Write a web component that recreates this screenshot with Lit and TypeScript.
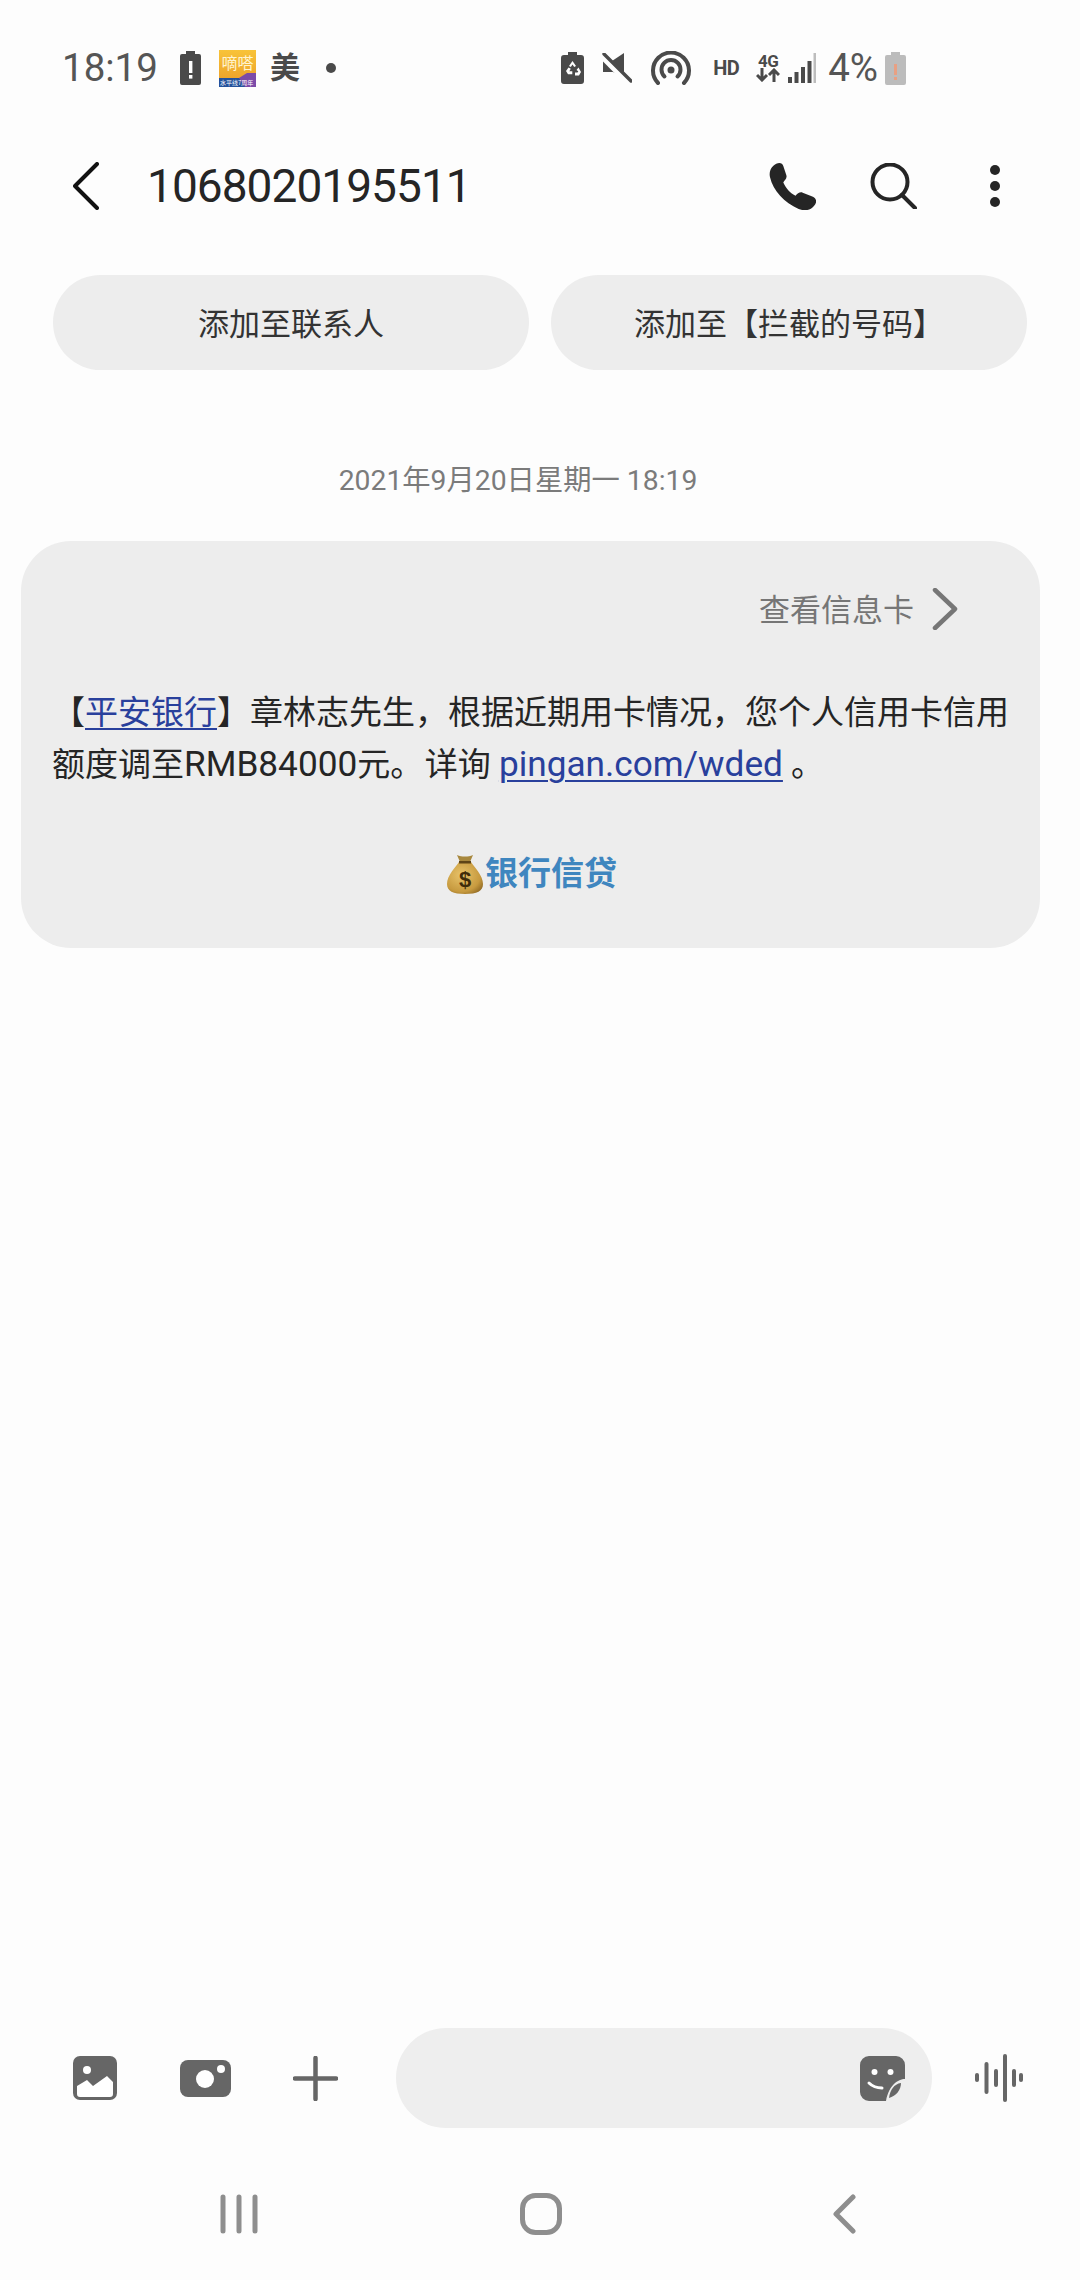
import { LitElement, html, css } from "lit";
import { customElement } from "lit/decorators.js";

@customElement("app-root")
export class AppRoot extends LitElement {
  static styles = css`
    :host { display: block; width: 1080px; height: 2280px; background: #fdfdfd; font-family: Roboto, "Noto Sans CJK SC", sans-serif; color: #252525; overflow: hidden; }
    svg { display: block; flex: none; }
    .page { display: flex; flex-direction: column; height: 2280px; }

    .status { height: 136px; flex: none; display: flex; align-items: center; padding-left: 62px; color: #555; }
    .time { font-size: 38.5px; line-height: 1; width: 118px; flex: none; }
    .mei { font-size: 30px; font-weight: 700; line-height: 1; margin-left: 14px; width: 56px; flex: none; color: #4a4a4a; }
    .app { margin-left: 18px; width: 37px; height: 37px; flex: none; }
    .dot { width: 10px; height: 10px; border-radius: 50%; background: #4a4a4a; flex: none; }
    .s-right { margin-left: auto; display: flex; align-items: center; padding-right: 174px; }
    .hd { font-size: 20px; font-weight: 700; line-height: 1; width: 28px; color: #4a4a4a; margin: 0 15px 0 22px; flex: none; letter-spacing: -0.5px; }
    .net { display: flex; flex-direction: column; align-items: center; width: 24px; flex: none; margin-right: 8px; }
    .net span { font-size: 17px; font-weight: 700; line-height: 14px; color: #4a4a4a; letter-spacing: -0.5px; }
    .pct { font-size: 38.5px; line-height: 1; margin: 0 7px 0 12px; flex: none; }

    .head { height: 100px; flex: none; display: flex; align-items: center; padding: 0 80px 0 73px; }
    .title { font-size: 46px; line-height: 1; margin-left: 48px; letter-spacing: -0.95px; color: #252525; }
    .head-icons { margin-left: auto; display: flex; align-items: center; }

    .actions { flex: none; margin-top: 39px; display: flex; gap: 22px; padding: 0 53px; }
    .btn { width: 476px; height: 95px; border-radius: 48px; background: #ededed; display: flex; align-items: center; justify-content: center; font-size: 31px; color: #333; padding-bottom: 2px; box-sizing: border-box; }

    .date { flex: none; height: 171px; display: flex; align-items: center; justify-content: center; font-size: 28.3px; color: #7b7b7b; padding-top: 43px; padding-right: 44px; box-sizing: border-box; }

    .bubble { flex: none; margin: 0 40px 0 21px; height: 407px; box-sizing: border-box; background: #ededed; border-radius: 50px; padding: 45px 32px 0 31px; }
    .card-link { display: flex; justify-content: flex-end; align-items: center; gap: 18px; height: 42px; padding-right: 50px; font-size: 31px; color: #767676; }
    .chev { margin-top: 3px; }
    .text { margin-top: 59px; font-size: 33px; line-height: 52px; white-space: nowrap; color: #252525; }
    .text a { color: #29409c; text-decoration: underline; text-underline-offset: 4px; text-decoration-thickness: 2px; }
    .text .latin { font-size: 35.2px; line-height: 0; }
    .sp { margin-right: 1.5px; }
    .promo { margin-top: 62px; display: flex; align-items: center; justify-content: center; gap: 2px; font-size: 33px; font-weight: 700; color: #3f86bf; line-height: 42px; padding-left: 4px; }

    .spacer { flex: 1; }

    .compose { flex: none; height: 100px; display: flex; align-items: center; padding-left: 73px; }
    .input { width: 536px; height: 100px; border-radius: 50px; background: #eeeeee; margin-left: 58px; display: flex; align-items: center; justify-content: flex-end; padding-right: 27px; box-sizing: border-box; flex: none; }

    .nav { flex: none; height: 152px; display: flex; align-items: center; padding: 20px 0 0 220px; box-sizing: border-box; }
  `;

  render() {
    return html`
      <div class="page">
        <div class="status">
          <span class="time">18:19</span>
          <svg width="21" height="34" viewBox="0 0 21 34"><path fill="#4a4a4a" d="M6 0h9v3h4a2 2 0 0 1 2 2v27a2 2 0 0 1-2 2H2a2 2 0 0 1-2-2V5a2 2 0 0 1 2-2h4z"/><rect x="9" y="10" width="3.4" height="12" fill="#fff"/><rect x="9" y="24" width="3.4" height="3.6" fill="#fff"/></svg>
          <svg class="app" viewBox="0 0 37 37">
            <defs><linearGradient id="ag" x1="0" y1="0" x2="0" y2="1"><stop offset="0" stop-color="#f8c338"/><stop offset="1" stop-color="#eea52c"/></linearGradient></defs>
            <rect width="37" height="28" fill="url(#ag)"/>
            <rect y="28" width="37" height="9" fill="#24519b"/>
            <path d="M20 28l8-5h9v14H26z" fill="#7c4ba8"/>
            <text x="18.5" y="19" text-anchor="middle" font-size="16" fill="#fff4d0" font-family="Noto Sans CJK SC">嘀嗒</text>
            <text x="1" y="35" font-size="6" fill="#fff" font-family="Noto Sans CJK SC">水平线7周年</text>
          </svg>
          <span class="mei">美</span>
          <span class="dot"></span>
          <div class="s-right">
            <svg width="23" height="32" viewBox="0 0 23 32"><path fill="#4a4a4a" d="M7 0h9v3h4a3 3 0 0 1 3 3v23a3 3 0 0 1-3 3H3a3 3 0 0 1-3-3V6a3 3 0 0 1 3-3h4z"/><path fill="#fff" d="M11.5 9l3.500 5-1.800 1-1.700-2.400-1.700 2.400-1.800-1zM5 19l2.500-3.500 2.300 1.300-1.500 2.400h3v3H7zM17.500 15.500l2.500 4.500-2 3.500h-4v-3h2.500l.8-1.300-1.800-1.200z"/></svg>
            <svg style="margin-left:18px" width="30" height="30" viewBox="0 0 30 30"><path fill="#4a4a4a" d="M22 0v24L11 19H1V8h9z"/><path d="M1 4l26 26" stroke="#fdfdfd" stroke-width="6.500"/><path d="M2 1l27 27" stroke="#4a4a4a" stroke-width="3.400" stroke-linecap="round"/></svg>
            <svg style="margin-left:19px" width="40" height="34" viewBox="0 0 40 34" fill="none" stroke="#4a4a4a" stroke-width="4" stroke-linecap="round"><path d="M7 32A18 18 0 1 1 33 32"/><path d="M13.500 25.500A9.500 9.500 0 1 1 26.500 25.500"/><circle cx="20" cy="19" r="3.500" fill="#4a4a4a" stroke="none"/></svg>
            <span class="hd">HD</span>
            <div class="net"><span>4G</span>
              <svg width="24" height="14" viewBox="0 0 24 14" fill="none" stroke="#4a4a4a" stroke-width="3"><path d="M6 0v12M1 7l5 5 5-5M18 14V2M13 7l5-5 5 5"/></svg>
            </div>
            <svg width="28" height="30" viewBox="0 0 28 30"><rect x="0" y="24" width="4" height="6" fill="#4a4a4a"/><rect x="6.500" y="19" width="4" height="11" fill="#4a4a4a"/><rect x="13" y="14" width="4" height="16" fill="#4a4a4a"/><rect x="19.500" y="8" width="4" height="22" fill="#4a4a4a"/><rect x="25.500" y="0" width="2.500" height="30" fill="#bdbdbd"/></svg>
            <span class="pct">4%</span>
            <svg width="21" height="33" viewBox="0 0 21 33"><path fill="#bcbcbc" d="M6 0h9v3h4a2 2 0 0 1 2 2v26a2 2 0 0 1-2 2H2a2 2 0 0 1-2-2V5a2 2 0 0 1 2-2h4z"/><rect x="9" y="12" width="3" height="11" fill="#e8a083"/><rect x="9" y="25" width="3" height="3" fill="#e8a083"/></svg>
          </div>
        </div>

        <div class="head">
          <svg width="26" height="48" viewBox="0 0 26 48" fill="none" stroke="#111" stroke-width="4" stroke-linecap="round" stroke-linejoin="round"><path d="M24 2L2 24l22 22"/></svg>
          <span class="title">1068020195511</span>
          <div class="head-icons">
            <svg width="47" height="47" viewBox="0 0 46 46"><path fill="#252525" d="M4 3C8-1 13-1 14 3L17 12C18 15 15 17 14 19C17 25 20 29 26 32C28 30 30 28 33 29L43 33C47 35 47 39 44 42C40 47 34 47 29 45C15 39 4 27 1 14C0 10 1 6 4 3Z"/></svg>
            <svg style="margin-left:54px" width="47" height="46" viewBox="0 0 47 46" fill="none" stroke="#252525" stroke-width="4" stroke-linecap="round"><circle cx="20" cy="19" r="17.500"/><path d="M32 32l13 13"/></svg>
            <svg style="margin-left:73px" width="10" height="42" viewBox="0 0 10 42" fill="#252525"><circle cx="5" cy="5" r="5"/><circle cx="5" cy="21" r="5"/><circle cx="5" cy="37" r="5"/></svg>
          </div>
        </div>

        <div class="actions">
          <div class="btn">添加至联系人</div>
          <div class="btn">添加至【拦截的号码】</div>
        </div>

        <div class="date">2021年9月20日星期一 18:19</div>

        <div class="bubble">
          <div class="card-link">
            <span>查看信息卡</span>
            <svg class="chev" width="26" height="42" viewBox="0 0 26 42" fill="none" stroke="#767676" stroke-width="4.500" stroke-linecap="round" stroke-linejoin="round"><path d="M3 2l20 19L3 40"/></svg>
          </div>
          <div class="text">【<a>平安银行</a>】章林志先生，根据近期用卡情况，您个人信用卡信用<br />额度调至<span class="latin">RMB84000</span><span class="sp">元。</span>详询 <a class="latin">pingan.com/wded</a> 。</div>
          <div class="promo">
            <svg width="36" height="40" viewBox="0 0 36 40">
              <defs><radialGradient id="bag" cx="0.4" cy="0.4" r="0.75"><stop offset="0" stop-color="#e8c36a"/><stop offset="0.7" stop-color="#c79a3f"/><stop offset="1" stop-color="#8a6420"/></radialGradient></defs>
              <path fill="url(#bag)" d="M12 8C9 13 0 21 0 30c0 7 6 10 18 10s18-3 18-10c0-9-9-17-12-22z"/>
              <path fill="#a8883e" d="M10 1c5 2 11 2 16 0l-3 7c-3 1-7 1-10 0z"/>
              <rect x="12" y="7" width="12" height="2.500" fill="#5f4517"/>
              <text x="18" y="33" text-anchor="middle" font-size="22" font-weight="700" font-family="Liberation Sans" fill="#3f2c0a">$</text>
            </svg>
            <span>银行信贷</span>
          </div>
        </div>

        <div class="spacer"></div>

        <div class="compose">
          <svg width="44" height="44" viewBox="0 0 44 44"><rect width="44" height="44" rx="7" fill="#666"/><circle cx="14" cy="14" r="4" fill="#fff"/><path fill="#fff" d="M4 30l10-6 6 6 14-10 6 6v12a3 3 0 0 1-3 3H7a3 3 0 0 1-3-3z"/></svg>
          <svg style="margin-left:63px" width="51" height="37" viewBox="0 0 51 37"><rect width="51" height="37" rx="8" fill="#666"/><circle cx="25" cy="19" r="9" fill="#fff"/><circle cx="41" cy="9" r="4" fill="#fff"/></svg>
          <svg style="margin-left:62px" width="45" height="45" viewBox="0 0 45 45" stroke="#666" stroke-width="4.500" stroke-linecap="round"><path d="M22.500 2v41M2 22.500h41"/></svg>
          <div class="input">
            <svg width="45" height="45" viewBox="0 0 45 45"><path fill="#666" d="M9 0h27a9 9 0 0 1 9 9v14C38 23 29 29 26 45H9a9 9 0 0 1-9-9V9a9 9 0 0 1 9-9z"/><circle cx="14.500" cy="16" r="3" fill="#fff"/><circle cx="30.500" cy="16" r="3" fill="#fff"/><path d="M9 27c4 4 8 5 13 5" fill="none" stroke="#fff" stroke-width="3" stroke-linecap="round"/><path fill="#666" d="M29 42C30 34 34 28 41 27 41 34 36 40 29 42z"/></svg>
          </div>
          <svg style="margin-left:43px" width="48" height="48" viewBox="0 0 48 48" fill="#666"><rect x="0" y="19" width="4" height="9" rx="2"/><rect x="9.500" y="8" width="4" height="32" rx="2"/><rect x="19" y="15" width="4" height="18" rx="2"/><rect x="28" y="0" width="4" height="48" rx="2"/><rect x="37" y="15" width="4" height="18" rx="2"/><rect x="44" y="19" width="4" height="9" rx="2"/></svg>
        </div>

        <div class="nav">
          <svg width="38" height="40" viewBox="0 0 38 40" stroke="#8e8e8e" stroke-width="5" stroke-linecap="round"><path d="M3 3v34M19 3v34M35 3v34"/></svg>
          <svg style="margin-left:262px" width="42" height="42" viewBox="0 0 42 42" fill="none" stroke="#8e8e8e" stroke-width="5"><rect x="2.500" y="2.500" width="37" height="37" rx="13"/></svg>
          <svg style="margin-left:270px" width="24" height="40" viewBox="0 0 24 40" fill="none" stroke="#8e8e8e" stroke-width="5" stroke-linecap="round" stroke-linejoin="round"><path d="M21 3L4 20l17 17"/></svg>
        </div>
      </div>
    `;
  }
}
